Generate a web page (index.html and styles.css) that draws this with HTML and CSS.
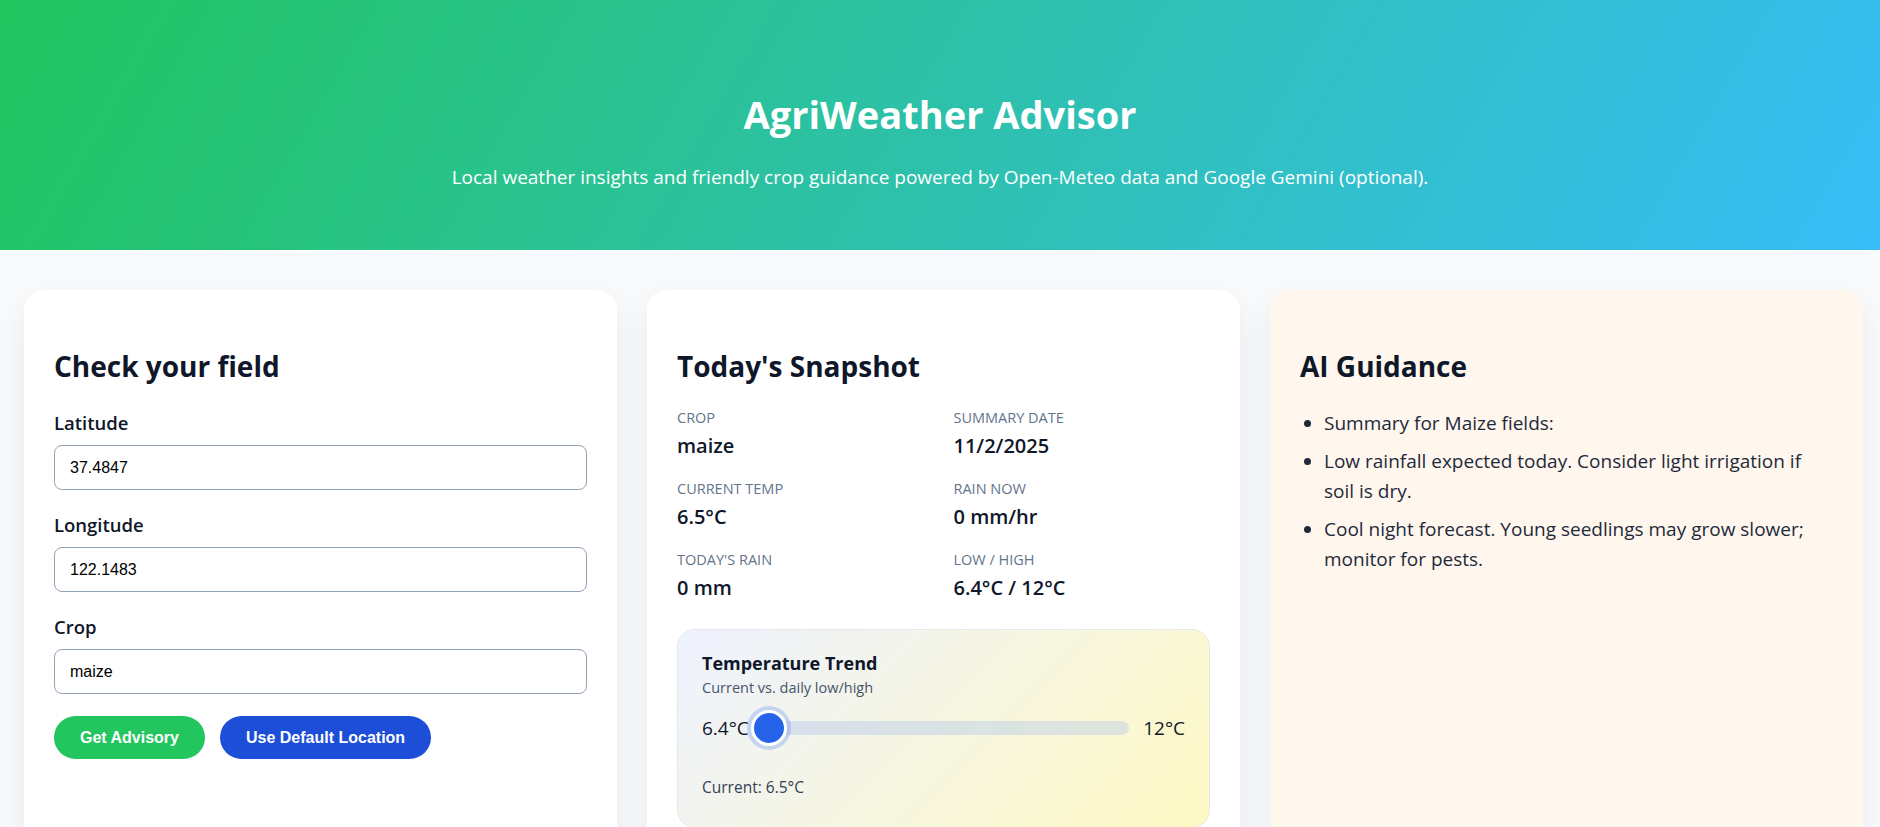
FILE: index.html
```html
<!DOCTYPE html>
<html lang="en">
<head>
<meta charset="utf-8">
<title>AgriWeather Advisor</title>
<link rel="stylesheet" href="styles.css">
</head>
<body>
<header class="hero">
  <h1 class="hero-title">AgriWeather Advisor</h1>
  <p class="hero-sub">Local weather insights and friendly crop guidance powered by Open-Meteo data and Google Gemini (optional).</p>
</header>
<main class="grid">
  <section class="card">
    <h2 class="card-title">Check your field</h2>
    <form class="form">
      <div class="field">
        <label class="field-label" for="lat">Latitude</label>
        <input class="field-input" id="lat" type="text" value="37.4847">
      </div>
      <div class="field">
        <label class="field-label" for="lon">Longitude</label>
        <input class="field-input" id="lon" type="text" value="122.1483">
      </div>
      <div class="field">
        <label class="field-label" for="crop">Crop</label>
        <input class="field-input" id="crop" type="text" value="maize">
      </div>
      <div class="actions">
        <button type="button" class="btn btn-green">Get Advisory</button>
        <button type="button" class="btn btn-blue">Use Default Location</button>
      </div>
    </form>
  </section>

  <section class="card">
    <h2 class="card-title">Today's Snapshot</h2>
    <div class="stats">
      <div class="stat"><div class="stat-label">Crop</div><div class="stat-value">maize</div></div>
      <div class="stat"><div class="stat-label">Summary Date</div><div class="stat-value">11/2/2025</div></div>
      <div class="stat"><div class="stat-label">Current Temp</div><div class="stat-value">6.5°C</div></div>
      <div class="stat"><div class="stat-label">Rain Now</div><div class="stat-value">0 mm/hr</div></div>
      <div class="stat"><div class="stat-label">Today's Rain</div><div class="stat-value">0 mm</div></div>
      <div class="stat"><div class="stat-label">Low / High</div><div class="stat-value">6.4°C / 12°C</div></div>
    </div>
    <div class="trend">
      <div class="trend-title">Temperature Trend</div>
      <div class="trend-sub">Current vs. daily low/high</div>
      <div class="trend-row">
        <span class="trend-end">6.4°C</span>
        <div class="track">
          <span class="knob" style="left: 1.8%"></span>
        </div>
        <span class="trend-end">12°C</span>
      </div>
      <div class="trend-current">Current: 6.5°C</div>
    </div>
  </section>

  <section class="card card-ai">
    <h2 class="card-title">AI Guidance</h2>
    <ul class="advice">
      <li>Summary for Maize fields:</li>
      <li>Low rainfall expected today. Consider light irrigation if soil is dry.</li>
      <li>Cool night forecast. Young seedlings may grow slower; monitor for pests.</li>
    </ul>
  </section>
</main>
</body>
</html>
```
FILE: styles.css
```css
* { box-sizing: border-box; }

html, body {
  margin: 0;
  padding: 0;
}

body {
  font-family: "Open Sans", "Noto Sans", sans-serif;
  background: #f8fafc;
  color: #0f172a;
  overflow: hidden;
}

.hero {
  height: 250px;
  padding: 90px 24px 0;
  text-align: center;
  color: #ffffff;
  background: linear-gradient(120deg, #22c55e 0%, #38bdf8 100%);
}

.hero-title {
  margin: 0 0 26px;
  font-size: 38px;
  line-height: 48px;
  font-weight: 700;
}

.hero-sub {
  margin: 0;
  font-size: 19px;
  line-height: 27px;
}

.grid {
  display: grid;
  grid-template-columns: repeat(3, 1fr);
  gap: 30px;
  padding: 40px 17px 0 24px;
  align-items: start;
}

.card {
  background: #ffffff;
  border-radius: 20px;
  padding: 30px 30px 40px;
  min-height: 640px;
  box-shadow: 0 12px 32px rgba(15, 23, 42, 0.07);
}

.card-ai {
  background: #fff7ed;
}

.card-title {
  margin: 28px 0 24px;
  font-size: 28px;
  line-height: 36px;
  font-weight: 700;
  color: #0f172a;
}

/* form */
.form {
  padding-top: 3px;
}

.field {
  display: flex;
  flex-direction: column;
  gap: 10px;
  margin-bottom: 23px;
}

.field-label {
  font-size: 18.5px;
  line-height: 24px;
  font-weight: 600;
  color: #0f172a;
}

.field-input {
  height: 45px;
  padding: 0 15px;
  border: 1px solid #94a3b8;
  border-radius: 8px;
  font-family: "Liberation Sans", Arial, sans-serif;
  font-size: 16px;
  color: #000;
  background: #fff;
}

.actions {
  display: flex;
  gap: 15px;
  margin-top: -1px;
}

.btn {
  height: 43px;
  padding: 0 26px;
  border: none;
  border-radius: 999px;
  font-family: "Liberation Sans", Arial, sans-serif;
  font-size: 16px;
  font-weight: 700;
  color: #ffffff;
}

.btn-green { background: #22c55e; }
.btn-blue { background: #1d4ed8; }

/* snapshot */
.stats {
  display: grid;
  grid-template-columns: 1fr 1fr;
  column-gap: 20px;
  row-gap: 19px;
}

.stat-label {
  font-size: 14.5px;
  line-height: 20px;
  text-transform: uppercase;
  color: #64748b;
}

.stat-value {
  margin-top: 4px;
  font-size: 20px;
  line-height: 28px;
  font-weight: 600;
  color: #0f172a;
}

.trend {
  margin-top: 27px;
  padding: 22px 24px 30px 24px;
  border: 1px solid #e5e7eb;
  border-radius: 18px;
  background: linear-gradient(135deg, #eef2ff 0%, #fef9c3 100%);
}

.trend-title {
  font-size: 18px;
  line-height: 22px;
  font-weight: 700;
  color: #0f172a;
}

.trend-sub {
  margin-top: 4px;
  font-size: 14.5px;
  line-height: 20px;
  color: #475569;
}

.trend-row {
  display: flex;
  align-items: center;
  gap: 14px;
  margin-top: 9px;
  height: 42px;
}

.trend-end {
  font-size: 19px;
  color: #0f172a;
}

.track {
  position: relative;
  flex: 1;
  height: 14px;
  border-radius: 999px;
  background: linear-gradient(90deg, #d6e0ec, #dde4dc);
}

.knob {
  position: absolute;
  top: 50%;
  width: 36px;
  height: 36px;
  border-radius: 50%;
  background: #2563eb;
  border: 3px solid #ffffff;
  box-shadow: 0 0 0 4px rgba(37, 99, 235, 0.22);
  transform: translate(-50%, -50%);
}

.trend-current {
  margin-top: 28px;
  font-size: 15.5px;
  line-height: 20px;
  color: #334155;
}

/* AI */
.advice {
  margin: 8px 0 0;
  padding-left: 24px;
  font-size: 19px;
  line-height: 30px;
  color: #1e293b;
}

.advice li {
  margin-bottom: 8px;
}
```
